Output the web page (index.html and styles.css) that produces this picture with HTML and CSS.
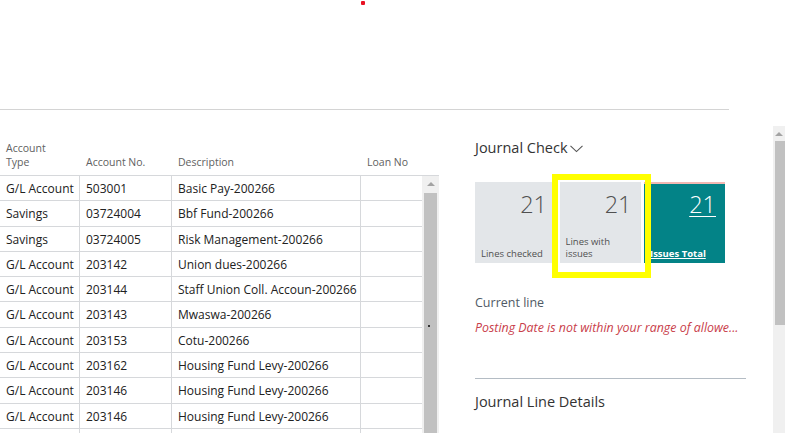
FILE: index.html
```html
<!DOCTYPE html>
<html>
<head>
<meta charset="utf-8">
<link rel="stylesheet" href="styles.css">
</head>
<body>
<div class="page">
  <div class="top">
    <div class="dot"></div>
  </div>
  <div class="topline"></div>
  <div class="main">
    <div class="left">
      <div class="thead">
        <div class="th">Account<br>Type</div>
        <div class="th">Account No.</div>
        <div class="th">Description</div>
        <div class="th">Loan No</div>
      </div>
      <div class="tbody">
        <div class="rows">
          <div class="row"><div class="td">G/L Account</div><div class="td">503001</div><div class="td">Basic Pay-200266</div><div class="td"></div></div>
          <div class="row"><div class="td">Savings</div><div class="td">03724004</div><div class="td">Bbf Fund-200266</div><div class="td"></div></div>
          <div class="row"><div class="td">Savings</div><div class="td">03724005</div><div class="td">Risk Management-200266</div><div class="td"></div></div>
          <div class="row"><div class="td">G/L Account</div><div class="td">203142</div><div class="td">Union dues-200266</div><div class="td"></div></div>
          <div class="row"><div class="td">G/L Account</div><div class="td">203144</div><div class="td">Staff Union Coll. Accoun-200266</div><div class="td"></div></div>
          <div class="row"><div class="td">G/L Account</div><div class="td">203143</div><div class="td">Mwaswa-200266</div><div class="td"></div></div>
          <div class="row"><div class="td">G/L Account</div><div class="td">203153</div><div class="td">Cotu-200266</div><div class="td"></div></div>
          <div class="row"><div class="td">G/L Account</div><div class="td">203162</div><div class="td">Housing Fund Levy-200266</div><div class="td"></div></div>
          <div class="row"><div class="td">G/L Account</div><div class="td">203146</div><div class="td">Housing Fund Levy-200266</div><div class="td"></div></div>
          <div class="row"><div class="td">G/L Account</div><div class="td">203146</div><div class="td">Housing Fund Levy-200266</div><div class="td"></div></div>
          <div class="row"><div class="td"></div><div class="td"></div><div class="td"></div><div class="td"></div></div>
        </div>
        <div class="vscroll">
          <div class="arrow"></div>
          <div class="thumb"><span class="speck"></span></div>
        </div>
      </div>
    </div>
    <div class="panel">
      <div class="ptitle">Journal Check
        <svg class="chev" width="13" height="8" viewBox="0 0 13 8"><polyline points="0.5,0.8 6.5,6.6 12.5,0.8" fill="none" stroke="#555" stroke-width="1.1"/></svg>
      </div>
      <div class="tiles">
        <div class="tile">
          <div class="num">21</div>
          <div class="lbl">Lines checked</div>
        </div>
        <div class="tile">
          <div class="num">21</div>
          <div class="lbl">Lines with<br>issues</div>
        </div>
        <div class="tile teal">
          <div class="num">21</div>
          <div class="lbl">Issues Total</div>
        </div>
        <div class="hilite"></div>
      </div>
      <div class="sublabel">Current line</div>
      <div class="err">Posting Date is not within your range of allowe...</div>
      <div class="divider"></div>
      <div class="ptitle2">Journal Line Details</div>
    </div>
    <div class="pscroll">
      <div class="arrow"></div>
      <div class="pthumb"></div>
    </div>
  </div>
</div>
</body>
</html>
```
FILE: styles.css
```css
html, body {
  margin: 0;
  padding: 0;
  background: #fff;
}
body {
  font-family: "Open Sans", "Noto Sans", sans-serif;
  color: #212121;
  overflow: hidden;
}
.page {
  width: 785px;
  height: 433px;
  overflow: hidden;
}
.top {
  height: 108px;
}
.dot {
  width: 4px;
  height: 4px;
  margin-left: 361px;
  margin-top: 1px;
  background: #e81123;
  border-radius: 1px;
}
.topline {
  width: 729px;
  height: 1px;
  background: #d4d4d4;
}
.main {
  display: flex;
  height: 324px;
}
.left {
  width: 439px;
  padding-top: 31px;
  flex: none;
}
.thead {
  display: grid;
  grid-template-columns: 80px 92px 189px 78px;
  height: 35px;
  border-bottom: 1px solid #d6d8db;
  box-sizing: border-box;
  align-items: end;
  padding-bottom: 6px;
}
.th {
  font-size: 10.5px;
  line-height: 14px;
  color: #616161;
  padding-left: 6px;
}
.tbody {
  display: flex;
}
.rows {
  width: 422px;
}
.row {
  display: grid;
  grid-template-columns: 80px 92px 189px 61px;
  height: 25.3px;
  border-bottom: 1px solid #d6d8db;
  box-sizing: border-box;
}
.td {
  font-size: 12px;
  line-height: 25px;
  padding-left: 6px;
  border-right: 1px solid #d6d8db;
  white-space: nowrap;
  overflow: hidden;
}
.td:last-child {
  border-right: none;
}
.vscroll {
  width: 17px;
  height: 260px;
  background: #f0f0f0;
  display: flex;
  flex-direction: column;
  align-items: center;
}
.arrow {
  width: 0;
  height: 0;
  border-left: 4px solid transparent;
  border-right: 4px solid transparent;
  border-bottom: 4px solid #a3a3a3;
  margin-top: 6px;
}
.thumb {
  width: 13px;
  height: 240px;
  margin-top: 7px;
  background: #c1c1c1;
  position: relative;
}
.speck {
  position: absolute;
  left: 4px;
  top: 132px;
  width: 2px;
  height: 2px;
  background: #333;
}
.panel {
  width: 271px;
  margin-left: 36px;
  flex: none;
}
.ptitle {
  margin-top: 27px;
  font-size: 14.5px;
  line-height: 22px;
  color: #333;
  display: flex;
  align-items: center;
}
.chev {
  margin-left: 2px;
  margin-top: 2px;
}
.tiles {
  margin-top: 23px;
  display: flex;
  position: relative;
}
.tile {
  width: 81px;
  height: 81px;
  background: #e3e6e9;
  margin-right: 3.5px;
  box-sizing: border-box;
  padding: 8px 9px 3px 6px;
  display: flex;
  flex-direction: column;
  color: #505050;
}
.num {
  text-align: right;
  font-size: 23.5px;
  font-weight: 300;
  line-height: 28px;
}
.lbl {
  margin-top: auto;
  font-size: 9.5px;
  line-height: 12px;
  white-space: nowrap;
}
.teal {
  background: #038387;
  border-top: 2px solid #f2b8b3;
  color: #fff;
  padding-top: 6px;
}
.teal .num {
  text-decoration: underline;
  text-decoration-thickness: 1px;
  text-underline-offset: 3px;
}
.teal .lbl {
  font-weight: 700;
  text-decoration: underline;
}
.hilite {
  position: absolute;
  left: 77px;
  top: -8px;
  width: 99px;
  height: 104px;
  border: 6.5px solid #ffff00;
  box-sizing: border-box;
}
.sublabel {
  margin-top: 31px;
  font-size: 12.5px;
  line-height: 18px;
  color: #505a66;
}
.err {
  margin-top: 8px;
  font-size: 12.4px;
  line-height: 16px;
  font-style: italic;
  color: #c9404a;
  white-space: nowrap;
}
.divider {
  margin-top: 42px;
  height: 1px;
  background: #b4bcc4;
}
.ptitle2 {
  margin-top: 13px;
  font-size: 14.5px;
  line-height: 20px;
  color: #333;
}
.pscroll {
  margin-left: auto;
  margin-top: 16px;
  width: 12px;
  background: #f0f0f0;
  display: flex;
  flex-direction: column;
  align-items: flex-start;
}
.pscroll .arrow {
  margin-left: 2px;
  margin-top: 6px;
}
.pthumb {
  width: 10px;
  margin-left: 2px;
  height: 184px;
  margin-top: 5px;
  background: #c1c1c1;
}
```
